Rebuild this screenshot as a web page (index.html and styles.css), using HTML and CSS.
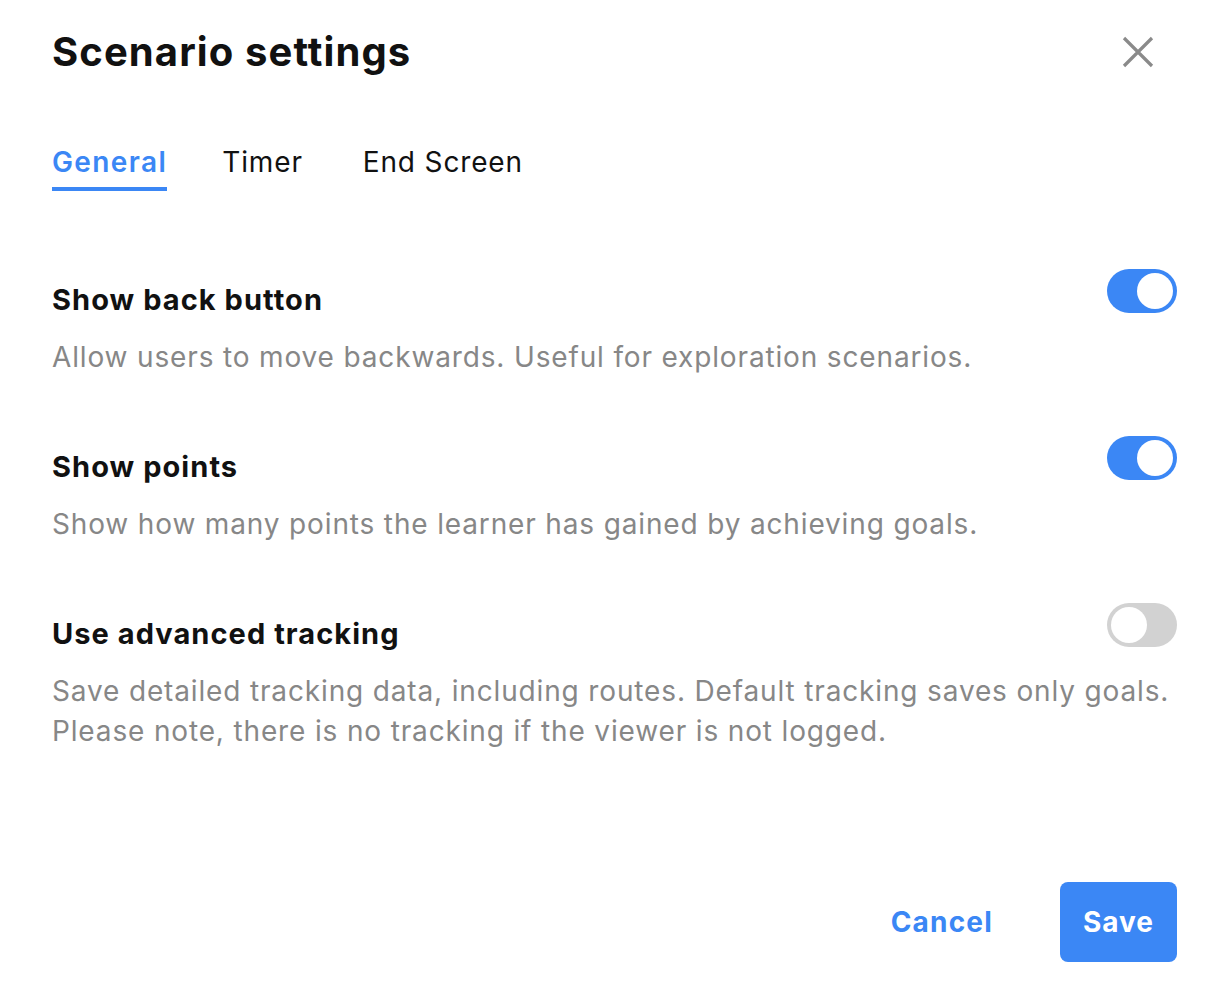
FILE: index.html
```html
<!DOCTYPE html>
<html lang="en">
<head>
<meta charset="utf-8">
<title>Scenario settings</title>
<link rel="stylesheet" href="styles.css">
</head>
<body>
<div class="dialog">
  <header class="dialog-header">
    <h1 class="dialog-title">Scenario settings</h1>
    <button class="close-btn" aria-label="Close">
      <svg width="32" height="32" viewBox="0 0 32 32"><path d="M2 2 L30 30 M30 2 L2 30" stroke="#8a8a8a" stroke-width="3.2" stroke-linecap="butt" fill="none"/></svg>
    </button>
  </header>

  <nav class="tabs">
    <span class="tab active">General</span>
    <span class="tab">Timer</span>
    <span class="tab tab-wide">End Screen</span>
  </nav>

  <div class="settings">
    <section class="setting">
      <div class="setting-head">
        <h2 class="setting-title">Show back button</h2>
        <span class="toggle on"><span class="thumb"></span></span>
      </div>
      <p class="setting-desc">Allow users to move backwards. Useful for exploration scenarios.</p>
    </section>
    <section class="setting">
      <div class="setting-head">
        <h2 class="setting-title">Show points</h2>
        <span class="toggle on"><span class="thumb"></span></span>
      </div>
      <p class="setting-desc">Show how many points the learner has gained by achieving goals.</p>
    </section>
    <section class="setting">
      <div class="setting-head">
        <h2 class="setting-title">Use advanced tracking</h2>
        <span class="toggle"><span class="thumb"></span></span>
      </div>
      <p class="setting-desc">Save detailed tracking data, including routes. Default tracking saves only goals.<br>Please note, there is no tracking if the viewer is not logged.</p>
    </section>
  </div>

  <footer class="actions">
    <button class="btn-cancel">Cancel</button>
    <button class="btn-save">Save</button>
  </footer>
</div>
</body>
</html>
```

FILE: styles.css
```css
* { box-sizing: border-box; }
html, body { margin: 0; padding: 0; background: #fff; }
body {
  font-family: Inter, "Noto Sans", sans-serif;
  color: #111;
}
.dialog {
  width: 1227px;
  padding: 28px 50px 0 52px;
}
.dialog-header {
  display: flex;
  align-items: center;
  justify-content: space-between;
  height: 48px;
}
.dialog-title {
  margin: 0;
  font-size: 40px;
  line-height: 48px;
  font-weight: 700;
  color: #111;
  letter-spacing: 1.1px;
}
.close-btn {
  border: 0;
  background: none;
  padding: 0;
  width: 32px;
  height: 32px;
  margin-right: 23px;
  display: flex;
  cursor: pointer;
}
.tabs {
  display: flex;
  gap: 55px;
  margin-top: 69px;
}
.tab {
  font-size: 28px;
  line-height: 34px;
  padding-bottom: 8px;
  border-bottom: 4px solid transparent;
  color: #111;
  letter-spacing: 0.85px;
}
.tab-wide { margin-left: 5px; }
.tab.active {
  color: #3b87f5;
  font-weight: 600;
  letter-spacing: 1.4px;
  border-bottom-color: #3b87f5;
}
.settings {
  display: flex;
  flex-direction: column;
  gap: 73px;
  margin-top: 92px;
}
.setting-head {
  display: flex;
  justify-content: space-between;
  align-items: flex-start;
}
.setting-title {
  margin: 0;
  font-size: 29px;
  line-height: 34px;
  font-weight: 700;
  color: #111;
  letter-spacing: 1.05px;
}
.toggle {
  position: relative;
  width: 70px;
  height: 44px;
  margin-top: -14px;
  border-radius: 22px;
  background: #d2d2d2;
  display: flex;
  align-items: center;
  padding: 0 4px;
  flex-shrink: 0;
}
.toggle.on {
  background: #3b87f5;
  justify-content: flex-end;
}
.thumb {
  width: 36px;
  height: 36px;
  border-radius: 50%;
  background: #fff;
}
.setting-desc {
  margin: 20px 0 0;
  font-size: 28px;
  line-height: 40px;
  color: #878787;
  letter-spacing: 0.85px;
}
.actions {
  display: flex;
  justify-content: flex-end;
  align-items: center;
  gap: 67px;
  margin-top: 131px;
}
.btn-cancel {
  border: 0;
  background: none;
  padding: 0;
  font-family: inherit;
  font-size: 28px;
  font-weight: 700;
  color: #3b87f5;
  letter-spacing: 1.2px;
}
.btn-save {
  border: 0;
  width: 117px;
  height: 80px;
  border-radius: 8px;
  background: #3b87f5;
  color: #fff;
  font-family: inherit;
  font-size: 28px;
  font-weight: 700;
  letter-spacing: 1px;
}
```
